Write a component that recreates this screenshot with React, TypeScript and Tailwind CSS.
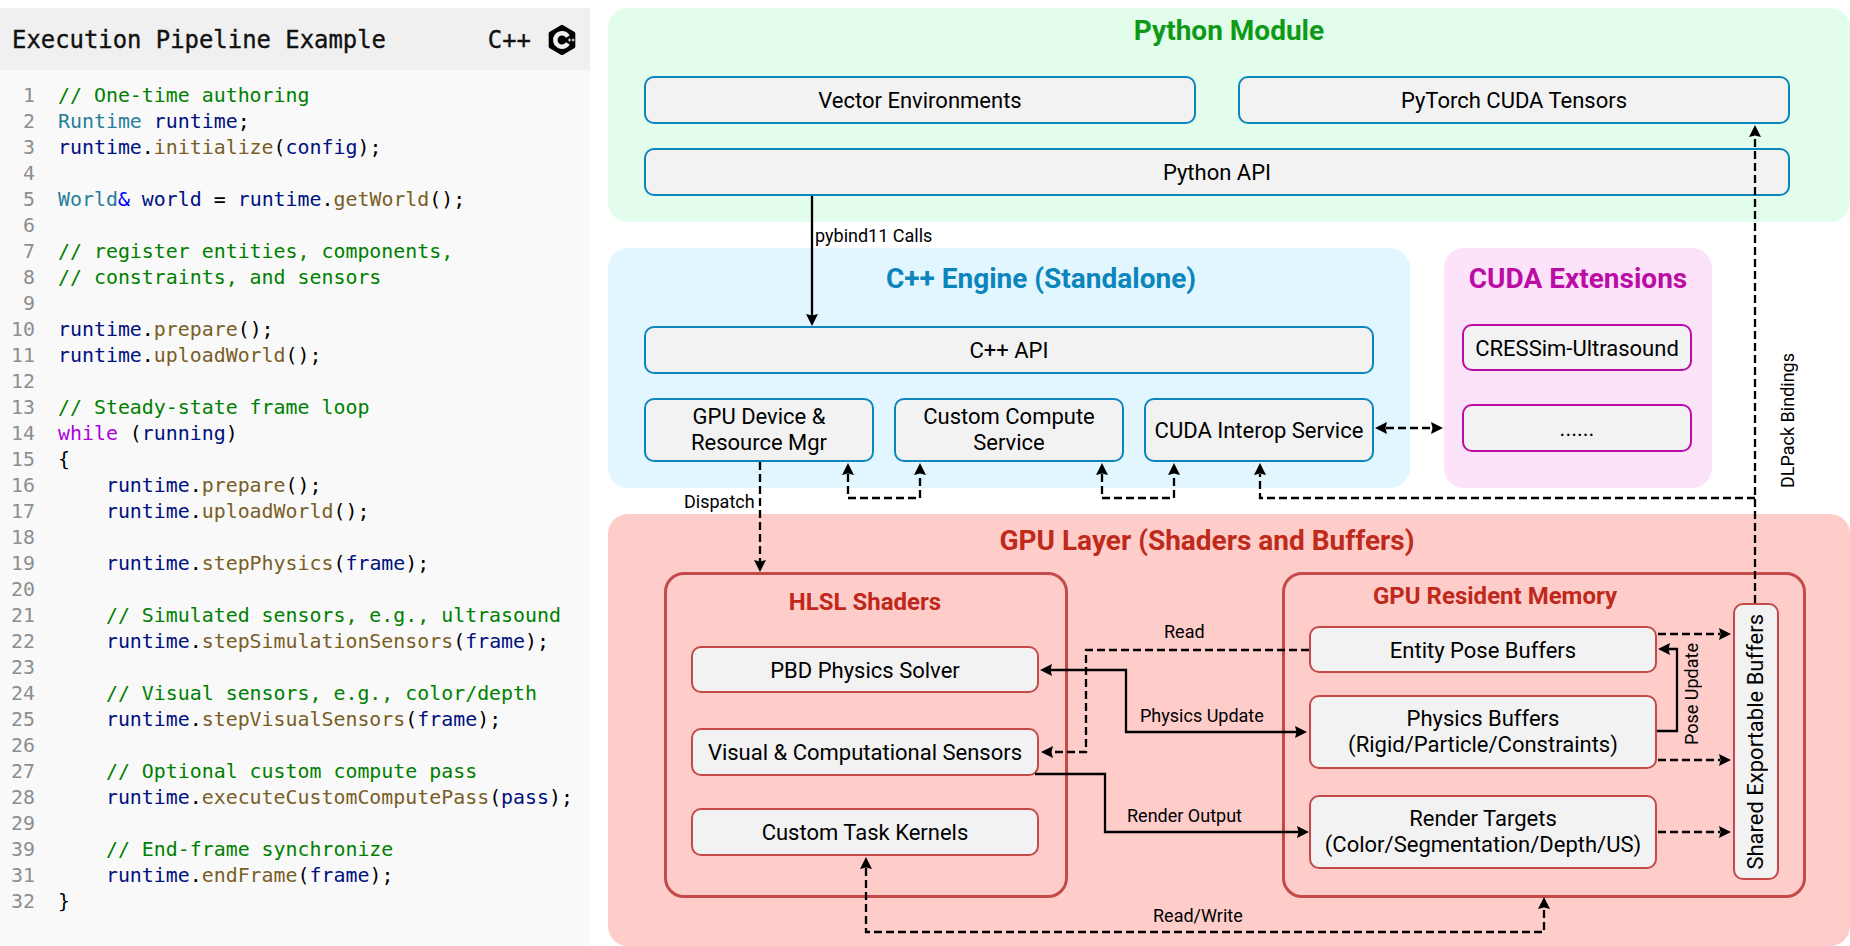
import { SiCplusplus } from "react-icons/si";

type Token = [string, string];

const C = "text-[#008000]";
const V = "text-[#001080]";
const T = "text-[#267f99]";
const F = "text-[#795e26]";
const K = "text-[#af00db]";
const A = "text-[#0000ff]";
const P = "text-black";

const call = (fn: string, arg?: string): Token[] => [
  ["    ", P],
  ["runtime", V],
  [".", P],
  [fn, F],
  ["(", P],
  ...(arg ? ([[arg, V]] as Token[]) : []),
  [");", P],
];

const codeLines: { n: number; tokens: Token[] }[] = [
  { n: 1, tokens: [["// One-time authoring", C]] },
  { n: 2, tokens: [["Runtime", T], [" ", P], ["runtime", V], [";", P]] },
  { n: 3, tokens: [["runtime", V], [".", P], ["initialize", F], ["(", P], ["config", V], [");", P]] },
  { n: 4, tokens: [] },
  { n: 5, tokens: [["World", T], ["&", A], [" ", P], ["world", V], [" = ", P], ["runtime", V], [".", P], ["getWorld", F], ["();", P]] },
  { n: 6, tokens: [] },
  { n: 7, tokens: [["// register entities, components,", C]] },
  { n: 8, tokens: [["// constraints, and sensors", C]] },
  { n: 9, tokens: [] },
  { n: 10, tokens: call("prepare").slice(1) },
  { n: 11, tokens: call("uploadWorld").slice(1) },
  { n: 12, tokens: [] },
  { n: 13, tokens: [["// Steady-state frame loop", C]] },
  { n: 14, tokens: [["while", K], [" (", P], ["running", V], [")", P]] },
  { n: 15, tokens: [["{", P]] },
  { n: 16, tokens: call("prepare") },
  { n: 17, tokens: call("uploadWorld") },
  { n: 18, tokens: [] },
  { n: 19, tokens: call("stepPhysics", "frame") },
  { n: 20, tokens: [] },
  { n: 21, tokens: [["    // Simulated sensors, e.g., ultrasound", C]] },
  { n: 22, tokens: call("stepSimulationSensors", "frame") },
  { n: 23, tokens: [] },
  { n: 24, tokens: [["    // Visual sensors, e.g., color/depth", C]] },
  { n: 25, tokens: call("stepVisualSensors", "frame") },
  { n: 26, tokens: [] },
  { n: 27, tokens: [["    // Optional custom compute pass", C]] },
  { n: 28, tokens: call("executeCustomComputePass", "pass") },
  { n: 29, tokens: [] },
  { n: 39, tokens: [["    // End-frame synchronize", C]] },
  { n: 31, tokens: call("endFrame", "frame") },
  { n: 32, tokens: [["}", P]] },
];

const CodePanel = () => (
  <div className="mt-2 flex h-[937px] w-[590px] shrink-0 flex-col bg-[#f9f9f9] font-['DejaVu_Sans_Mono',monospace]">
    <div className="flex h-[62px] items-center justify-between bg-[#f0f0f0] pl-[12px] pr-[13px] pt-[3px] text-[23.9px] text-[#111] [-webkit-text-stroke:0.35px_#111]">
      <span>Execution Pipeline Example</span>
      <div className="flex items-center gap-[16px]">
        <span>C++</span>
        <SiCplusplus className="h-[30px] w-[30px] text-black" />
      </div>
    </div>
    <div className="pt-[13px] text-[19.9px]">
      {codeLines.map((line, i) => (
        <div key={i} className="flex h-[26px] leading-[26px]">
          <span className="mr-[23px] w-[35px] text-right text-[#8e8e8e]">{line.n}</span>
          <span className="whitespace-pre">
            {line.tokens.map((t, j) => (
              <span key={j} className={t[1]}>
                {t[0]}
              </span>
            ))}
          </span>
        </div>
      ))}
    </div>
  </div>
);

const BLUE = "border-[#0c85bd]";
const PINK = "border-[#bb0da5]";
const RED = "border-[#c44a4a]";

const Box = ({ border, className = "", children }: { border: string; className?: string; children: React.ReactNode }) => (
  <div
    className={`box-border flex items-center justify-center rounded-[10px] border-2 bg-[#f2f2f2] text-center text-[22px] leading-[26px] text-black ${border} ${className}`}
  >
    {children}
  </div>
);

// connector drawing, all in page coordinates
const Head = ({ x, y, dir }: { x: number; y: number; dir: "u" | "d" | "l" | "r" }) => {
  const rot = { u: 0, r: 90, d: 180, l: 270 }[dir];
  return <path d="M0 0 L6 12 L0 10.5 L-6 12 Z" fill="#000" transform={`translate(${x} ${y}) rotate(${rot})`} />;
};

const Line = ({ d, dashed = false }: { d: string; dashed?: boolean }) => (
  <path d={d} fill="none" stroke="#000" strokeWidth={2.3} strokeDasharray={dashed ? "8 4" : undefined} />
);

const Connectors = () => (
  <svg className="pointer-events-none absolute left-0 top-0 h-[946px] w-[1850px]" viewBox="0 0 1850 946">
    {/* python api -> c++ api */}
    <Line d="M812 196 V316" />
    <Head x={812} y={326} dir="d" />
    {/* dispatch */}
    <Line d="M760 462 V562" dashed />
    <Head x={760} y={572} dir="d" />
    {/* engine service loops */}
    <Line d="M848 474 V498 H920 V474" dashed />
    <Head x={848} y={463} dir="u" />
    <Head x={920} y={463} dir="u" />
    <Line d="M1102 474 V498 H1174 V474" dashed />
    <Head x={1102} y={463} dir="u" />
    <Head x={1174} y={463} dir="u" />
    {/* interop <-> extensions */}
    <Line d="M1386 428 H1432" dashed />
    <Head x={1375} y={428} dir="l" />
    <Head x={1443} y={428} dir="r" />
    {/* dlpack */}
    <Line d="M1755 603 V136" dashed />
    <Head x={1755} y={125} dir="u" />
    <Line d="M1755 498 H1260 V474" dashed />
    <Head x={1260} y={463} dir="u" />
    {/* read */}
    <Line d="M1309 650 H1086 V752 H1052" dashed />
    <Head x={1041} y={752} dir="l" />
    {/* physics update */}
    <Line d="M1050 670 H1126 V732 H1297" />
    <Head x={1040} y={670} dir="l" />
    <Head x={1307} y={732} dir="r" />
    {/* render output */}
    <Line d="M1035 774 H1105 V832 H1299" />
    <Head x={1309} y={832} dir="r" />
    {/* read/write */}
    <Line d="M866 868 V932 H1544 V908" dashed />
    <Head x={866} y={857} dir="u" />
    <Head x={1544} y={897} dir="u" />
    {/* memory -> shared */}
    <Line d="M1658 634 H1720" dashed />
    <Head x={1731} y={634} dir="r" />
    <Line d="M1658 760 H1720" dashed />
    <Head x={1731} y={760} dir="r" />
    <Line d="M1658 832 H1720" dashed />
    <Head x={1731} y={832} dir="r" />
    {/* pose update */}
    <Line d="M1657 731 H1677 V649 H1668" />
    <Head x={1658} y={649} dir="l" />
  </svg>
);

const Label = ({ className, children }: { className: string; children: React.ReactNode }) => (
  <span className={`absolute whitespace-nowrap text-[18px] leading-[20px] text-black ${className}`}>{children}</span>
);

export default function App() {
  return (
    <div className="relative flex h-[946px] w-[1850px] overflow-hidden bg-white font-['Roboto',sans-serif]">
      <CodePanel />
      <div className="ml-[18px] flex w-[1242px] flex-col pt-2">
        <section className="h-[214px] rounded-[20px] bg-[#e2fdeb] pl-9 pr-[60px]">
          <h2 className="mb-6 h-[44px] pl-6 pt-px text-center text-[28px] font-bold leading-[44px] text-[#0e9a17]">Python Module</h2>
          <div className="flex gap-[42px]">
            <Box border={BLUE} className="h-12 flex-1 pt-px">Vector Environments</Box>
            <Box border={BLUE} className="h-12 flex-1 pt-px">PyTorch CUDA Tensors</Box>
          </div>
          <Box border={BLUE} className="mt-6 h-12 pt-px">Python API</Box>
        </section>

        <div className="mt-[26px] flex gap-[34px]">
          <section className="h-[240px] w-[802px] rounded-[20px] bg-[#e1f6fe] pl-9 pr-9">
            <h2 className="mb-[18px] h-[60px] pl-[64px] pt-px text-center text-[28px] font-bold leading-[60px] text-[#0c85bd]">C++ Engine (Standalone)</h2>
            <Box border={BLUE} className="h-12 pt-px">C++ API</Box>
            <div className="mt-6 flex gap-5">
              <Box border={BLUE} className="h-16 flex-1">GPU Device &amp;<br />Resource Mgr</Box>
              <Box border={BLUE} className="h-16 flex-1">Custom Compute<br />Service</Box>
              <Box border={BLUE} className="h-16 flex-1 pt-px">CUDA Interop Service</Box>
            </div>
          </section>
          <section className="h-[240px] w-[268px] rounded-[20px] bg-[#fde3fa] pl-[18px] pr-5">
            <h2 className="mb-4 h-[60px] pl-[2px] pt-px text-center text-[28px] font-bold leading-[60px] text-[#bb0da5]">CUDA Extensions</h2>
            <Box border={PINK} className="h-[47px] pt-[2px]">CRESSim-Ultrasound</Box>
            <Box border={PINK} className="mt-[33px] h-12 pt-px">......</Box>
          </section>
        </div>

        <section className="mt-[26px] h-[432px] rounded-[20px] bg-[#fecdca] pl-14">
          <h2 className="h-[54px] pr-[100px] text-center text-[28px] font-bold leading-[54px] text-[#bf2a1a]">GPU Layer (Shaders and Buffers)</h2>
          <div className="mt-1 flex gap-[214px]">
            <div className={`box-border h-[326px] w-[404px] rounded-[20px] border-[3px] pl-6 pr-[26px] ${RED}`}>
              <h3 className="mb-[18px] h-[53px] pt-px text-center text-[24px] font-bold leading-[53px] text-[#c0281c]">HLSL Shaders</h3>
              <Box border={RED} className="h-[47px] pt-[2px]">PBD Physics Solver</Box>
              <Box border={RED} className="mt-[35px] h-12 pt-px">Visual &amp; Computational Sensors</Box>
              <Box border={RED} className="mt-8 h-12 pt-px">Custom Task Kernels</Box>
            </div>
            <div className={`box-border flex h-[326px] w-[524px] gap-[76px] rounded-[20px] border-[3px] pl-6 ${RED}`}>
              <div className="w-[348px]">
                <h3 className="mb-[10px] h-[41px] pl-6 pt-px text-center text-[24px] font-bold leading-[41px] text-[#c0281c]">GPU Resident Memory</h3>
                <Box border={RED} className="h-[47px] pt-[2px]">Entity Pose Buffers</Box>
                <Box border={RED} className="mt-[22px] h-[74px]">Physics Buffers<br />(Rigid/Particle/Constraints)</Box>
                <Box border={RED} className="mt-[26px] h-[74px]">Render Targets<br />(Color/Segmentation/Depth/US)</Box>
              </div>
              <Box border={RED} className="mt-7 h-[277px] w-[46px]">
                <span className="whitespace-nowrap [writing-mode:vertical-rl] rotate-180">Shared Exportable Buffers</span>
              </Box>
            </div>
          </div>
        </section>
      </div>

      <Connectors />

      <Label className="left-[815px] top-[226px]">pybind11 Calls</Label>
      <Label className="left-[684px] top-[492px]">Dispatch</Label>
      <Label className="left-[1164px] top-[622px]">Read</Label>
      <Label className="left-[1140px] top-[706px]">Physics Update</Label>
      <Label className="left-[1127px] top-[806px]">Render Output</Label>
      <Label className="left-[1153px] top-[906px]">Read/Write</Label>
      <Label className="left-[1778px] top-[353px] [writing-mode:vertical-rl] rotate-180">DLPack Bindings</Label>
      <Label className="left-[1682px] top-[643px] [writing-mode:vertical-rl] rotate-180">Pose Update</Label>
    </div>
  );
}
